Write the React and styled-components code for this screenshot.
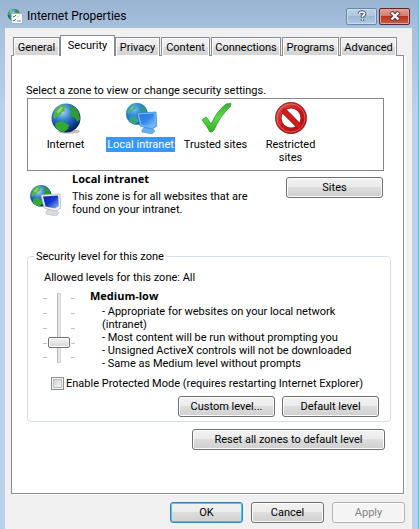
import { useState } from "react";
import styled, { createGlobalStyle } from "styled-components";

const tabs = [
  { name: "General", width: 47 },
  { name: "Security", width: 55 },
  { name: "Privacy", width: 45 },
  { name: "Content", width: 49 },
  { name: "Connections", width: 70 },
  { name: "Programs", width: 57 },
  { name: "Advanced", width: 57 },
];

function Continents() {
  return (
    <>
      <path
        d="M5 9C7 5 11 3 14 3L16 5L14 7L15 9L12 10L10 13L7 14L5 17L3 15Z"
        fill="#52b53c"
      />
      <path
        d="M21 4C25 5 28 8 29 12L30 17L28 20L26 18L25 15L22 15L20 12L22 9L20 6Z"
        fill="#2f9c2e"
      />
      <path
        d="M6 21L10 19L14 20L19 23L18 27L14 30C10 30 6 27 5 24Z"
        fill="#35a935"
      />
      <path d="M7 9L11 5L13 5L11 9L8 12Z" fill="#b4e38e" opacity=".7" />
    </>
  );
}

function Globe({ id }) {
  return (
    <>
      <defs>
        <radialGradient id={id} cx=".38" cy=".28" r=".75">
          <stop offset="0" stopColor="#a8d8f5" />
          <stop offset=".4" stopColor="#3382cb" />
          <stop offset=".75" stopColor="#124398" />
          <stop offset="1" stopColor="#061c56" />
        </radialGradient>
      </defs>
      <circle cx="16" cy="16" r="14.5" fill={`url(#${id})`} />
      <Continents />
    </>
  );
}

function GlobeIcon() {
  return (
    <svg width="32" height="32" viewBox="0 0 32 32" aria-hidden="true">
      <ellipse cx="19" cy="29.5" rx="11" ry="2" fill="#777" opacity=".5" />
      <Globe id="globe-internet" />
    </svg>
  );
}

function IntranetIcon({ id, selected }) {
  const edge = selected ? "#6cb8f4" : "#f1f4f7";
  return (
    <svg width="32" height="32" viewBox="0 0 32 32" aria-hidden="true">
      <defs>
        <linearGradient id={`${id}-screen`} x1="0" y1="0" x2="1" y2="1">
          <stop offset="0" stopColor={selected ? "#2a72dd" : "#0c22a6"} />
          <stop offset=".5" stopColor={selected ? "#3487e8" : "#153bd0"} />
          <stop offset="1" stopColor={selected ? "#8ac7fb" : "#9bc2f2"} />
        </linearGradient>
      </defs>
      <g transform="scale(.74)">
        <Globe id={`${id}-globe`} />
        {selected && <circle cx="16" cy="16" r="15" fill="#3399ff" opacity=".4" />}
      </g>
      <path
        d="M17 28L20 24L26 25L30 29L27 32L17 30Z"
        fill={selected ? "#65b0f0" : "#d9dde0"}
        stroke={selected ? "#4d94d2" : "#b1b7bd"}
        strokeWidth=".6"
      />
      <path
        d="M12 11L31 10L32 24L27 27L15 24Z"
        fill={edge}
        stroke={selected ? "#3182cf" : "#a9b0b7"}
        strokeWidth=".7"
      />
      <path d="M14 12.500L29 11.500L30 22L26 24.500L16.500 22.500Z" fill={`url(#${id}-screen)`} />
    </svg>
  );
}

function CheckIcon() {
  return (
    <svg width="32" height="32" viewBox="0 0 32 32" aria-hidden="true">
      <defs>
        <linearGradient id="check-fill" x1="0" y1="0" x2="0" y2="1">
          <stop offset="0" stopColor="#3fae37" />
          <stop offset=".5" stopColor="#58dd45" />
          <stop offset="1" stopColor="#2fae25" />
        </linearGradient>
      </defs>
      <path
        d="M2 18L6 15Q8 17 11 22Q17 9 26 2L31 1.500L30 5Q20 14 14 28L12 30L10 30Q7 24 2 18Z"
        fill="url(#check-fill)"
        stroke="#34942e"
        strokeWidth=".8"
      />
    </svg>
  );
}

function BlockedIcon() {
  return (
    <svg width="32" height="32" viewBox="0 0 32 32" aria-hidden="true">
      <defs>
        <linearGradient id="blocked-fill" x1="0" y1="0" x2="1" y2="1">
          <stop offset="0" stopColor="#d9504f" />
          <stop offset=".5" stopColor="#cc1717" />
          <stop offset="1" stopColor="#b40c0c" />
        </linearGradient>
      </defs>
      <g fill="none">
        <circle cx="16" cy="16" r="12.700" stroke="#9c2020" strokeWidth="6.500" />
        <path d="M7 7L25 25" stroke="#a01818" strokeWidth="6" />
        <circle cx="16" cy="16" r="12.700" stroke="url(#blocked-fill)" strokeWidth="4.600" />
        <circle cx="16" cy="16" r="14" stroke="#e58a86" strokeWidth=".8" opacity=".8" />
        <path d="M7.500 7.500L24.500 24.500" stroke="#cf1c1c" strokeWidth="4.600" />
      </g>
    </svg>
  );
}

function PropertiesIcon() {
  return (
    <svg width="16" height="16" viewBox="0 0 16 16" aria-hidden="true">
      <g transform="scale(.42)">
        <Globe id="globe-title" />
      </g>
      <rect x="4.500" y="5.500" width="11" height="10" fill="#f8fafb" stroke="#a9b6c0" />
      <path d="M6 8l1 1 2-2M6 12l1 1 2-2" fill="none" stroke="#3a7fb4" />
      <path d="M10 13h4" stroke="#7f8c96" />
      <path d="M10 9h2" stroke="#c6cdd2" />
    </svg>
  );
}

function HelpIcon() {
  return (
    <svg width="12" height="12" viewBox="0 0 12 12" aria-hidden="true">
      <g fill="none">
        <path d="M3.500 4V3Q6 1 8.500 3Q9 5 6.500 6V8M6.500 9V11" stroke="#4b5768" strokeWidth="3.400" />
        <path d="M3.500 4V3Q6 1 8.500 3Q9 5 6.500 6V7.500M6.500 9V10.500" stroke="#fff" strokeWidth="1.600" />
      </g>
    </svg>
  );
}

function CloseIcon() {
  return (
    <svg width="12" height="10" viewBox="0 0 12 10" aria-hidden="true">
      <path d="M2 1L10 9M10 1L2 9" stroke="#5b3a42" strokeWidth="4.400" />
      <path d="M2.500 1.500L9.500 8.500M9.500 1.500L2.500 8.500" stroke="#f4f4f4" strokeWidth="2.400" />
    </svg>
  );
}

const zones = [
  { name: "Internet", icon: () => <GlobeIcon /> },
  {
    name: "Local intranet",
    icon: (selected) => <IntranetIcon id="zone" selected={selected} />,
  },
  { name: "Trusted sites", icon: () => <CheckIcon /> },
  { name: "Restricted sites", icon: () => <BlockedIcon /> },
];

function App() {
  const [tab, setTab] = useState("Security");
  const [zone, setZone] = useState("Local intranet");
  const [level, setLevel] = useState(1);

  return (
    <>
      <GlobalStyle />
      <Window>
        <TitleBar>
          <PropertiesIcon />
          <Title>Internet Properties</Title>
          <CaptionButton aria-label="Help">
            <HelpIcon />
          </CaptionButton>
          <CaptionButton $close aria-label="Close">
            <CloseIcon />
          </CaptionButton>
        </TitleBar>
        <Body>
          <TabList role="tablist">
            {tabs.map((item) => (
              <Tab
                key={item.name}
                role="tab"
                aria-selected={tab === item.name}
                $active={tab === item.name}
                $width={item.width}
                onClick={() => setTab(item.name)}
              >
                {item.name}
              </Tab>
            ))}
          </TabList>
          <Panel>
            <Prompt id="zone-prompt">
              Select a zone to view or change security settings.
            </Prompt>
            <ZoneList aria-labelledby="zone-prompt" role="group">
              {zones.map((item) => (
                <Zone
                  key={item.name}
                  aria-pressed={zone === item.name}
                  onClick={() => setZone(item.name)}
                >
                  {item.icon(zone === item.name)}
                  <ZoneName $selected={zone === item.name}>{item.name}</ZoneName>
                </Zone>
              ))}
            </ZoneList>
            <ZoneInfo>
              <IntranetIcon id="info" />
              <ZoneText>
                <Heading>Local intranet</Heading>
                <p>This zone is for all websites that are found on your intranet.</p>
              </ZoneText>
              <Button $width={97}>Sites</Button>
            </ZoneInfo>
            <Group>
              <legend>Security level for this zone</legend>
              <Allowed id="allowed">Allowed levels for this zone: All</Allowed>
              <LevelRow>
                <Slider>
                  <Ticks />
                  <Range
                    type="range"
                    min="0"
                    max="4"
                    value={level}
                    aria-labelledby="allowed"
                    onChange={(e) => setLevel(Number(e.target.value))}
                  />
                  <Ticks />
                </Slider>
                <div>
                  <Heading>Medium-low</Heading>
                  <Details>
                    <li>- Appropriate for websites on your local network (intranet)</li>
                    <li>- Most content will be run without prompting you</li>
                    <li>- Unsigned ActiveX controls will not be downloaded</li>
                    <li>- Same as Medium level without prompts</li>
                  </Details>
                </div>
              </LevelRow>
              <CheckLabel>
                <Checkbox type="checkbox" />
                Enable Protected Mode (requires restarting Internet Explorer)
              </CheckLabel>
              <GroupButtons>
                <Button $width={97}>Custom level...</Button>
                <Button $width={97}>Default level</Button>
              </GroupButtons>
            </Group>
            <ResetRow>
              <Button $width={193}>Reset all zones to default level</Button>
            </ResetRow>
          </Panel>
          <Footer>
            <Button $width={73} $primary>
              OK
            </Button>
            <Button $width={73}>Cancel</Button>
            <Button $width={73} disabled>
              Apply
            </Button>
          </Footer>
        </Body>
      </Window>
    </>
  );
}

export default App;

const GlobalStyle = createGlobalStyle`
  * {
    box-sizing: border-box;
    margin: 0;
    padding: 0;
  }
  body {
    background: #b9d1ea;
    color: #000;
  }
  body, button, input {
    font-family: Tahoma, Roboto, sans-serif;
    font-size: 11px;
    line-height: 13px;
  }
  svg {
    display: block;
    flex-shrink: 0;
  }
`;

const Window = styled.div`
  padding: 0 6px 0 5px;
  border-right: 1px solid #45cdec;
  background: linear-gradient(#99b4d1, #a6c0dd 28px, #b9d1ea 110px);
`;

const TitleBar = styled.header`
  display: flex;
  align-items: center;
  gap: 2px;
  height: 28px;
  padding: 4px 2px 0;
`;

const Title = styled.h1`
  flex: 1;
  padding-left: 2px;
  font-size: 12px;
  font-weight: 400;
  line-height: 16px;
`;

const CaptionButton = styled.button`
  display: flex;
  align-items: center;
  justify-content: center;
  width: 31px;
  height: 17px;
  border: 1px solid ${(p) => (p.$close ? "#5c2531" : "#6a85a5")};
  border-radius: 2px;
  box-shadow: inset 0 0 0 1px ${(p) => (p.$close ? "#e0a29b" : "#c9dbef")};
  background: ${(p) =>
    p.$close
      ? "linear-gradient(#e3a197, #d2796b 48%, #b8321c 50%, #cb6048)"
      : "linear-gradient(#bdd0e7, #afc6e1 48%, #9db7d5 50%, #b3cae4)"};
`;

const Body = styled.main`
  padding: 7px 7px 6px 6px;
  background: #f0f0f0;
`;

const TabList = styled.div`
  display: flex;
  align-items: flex-end;
  height: 21px;
  padding: 0 2px;
  gap: 1px;
`;

const Tab = styled.button`
  flex: 0 1 ${(p) => p.$width}px;
  height: ${(p) => (p.$active ? 21 : 19)}px;
  margin: ${(p) => (p.$active ? "0 -1px" : "0")};
  padding-bottom: ${(p) => (p.$active ? 2 : 0)}px;
  border: 1px solid #898c95;
  border-bottom: 0;
  position: relative;
  z-index: ${(p) => (p.$active ? 1 : 0)};
  box-shadow: ${(p) => (p.$active ? "none" : "inset 0 0 0 1px #fbfbfb")};
  background: ${(p) =>
    p.$active ? "#fff" : "linear-gradient(#f2f2f2, #ebebeb 48%, #dedede 50%, #d2d2d2)"};
  white-space: nowrap;
`;

const Panel = styled.section`
  margin-top: -1px;
  padding: 28px 12px 43px 15px;
  margin-right: 1px;
  border: 1px solid #898c95;
  box-shadow: 2px 1px 0 #fff;
  background: #fff;
`;

const Prompt = styled.p`
  margin-left: -1px;
`;

const ZoneList = styled.div`
  display: flex;
  height: 73px;
  margin: 1px 7px 0 0;
  padding: 3px 0;
  border: 1px solid #828790;
`;

const Zone = styled.button`
  display: flex;
  flex-direction: column;
  align-items: center;
  gap: 3px;
  width: 75px;
  border: 0;
  background: none;
`;

const ZoneName = styled.span`
  max-width: 70px;
  padding: 1px;
  background: ${(p) => (p.$selected ? "#3399ff" : "transparent")};
  color: ${(p) => (p.$selected ? "#fff" : "#000")};
`;

const ZoneInfo = styled.div`
  display: flex;
  align-items: flex-start;
  padding: 0 8px 0 2px;
  margin-top: 1px;
  > svg {
    margin-top: 12px;
  }
  button {
    margin-top: 5px;
  }
`;

const ZoneText = styled.div`
  flex: 1;
  padding: 0 24px 0 11px;
  p {
    margin-top: 5px;
  }
`;

const Heading = styled.h2`
  font-family: Tahoma, "Open Sans", sans-serif;
  font-size: 11px;
  font-weight: 700;
  line-height: 13px;
`;

const Button = styled.button`
  width: ${(p) => p.$width}px;
  height: 21px;
  border: 1px solid ${(p) => (p.$primary ? "#3c7fb1" : "#707070")};
  border-radius: 3px;
  box-shadow: inset 0 0 0 1px ${(p) => (p.$primary ? "#48c8f0" : "#fcfcfc")};
  background: linear-gradient(#f2f2f2, #ebebeb 49%, #dddddd 50%, #cfcfcf);
  color: #000;
  &:disabled {
    border-color: #adb2b5;
    background: #f4f4f4;
    color: #838383;
  }
`;

const Group = styled.fieldset`
  margin-top: 34px;
  padding: 0 11px 4px 15px;
  border: 1px solid #d5dfe5;
  border-radius: 4px;
  legend {
    margin-left: -9px;
    padding: 0 2px;
  }
`;

const Allowed = styled.p`
  margin-top: 8px;
  margin-left: 1px;
`;

const LevelRow = styled.div`
  display: flex;
  gap: 15px;
  margin-top: 5px;
`;

const Slider = styled.div`
  display: flex;
  flex-shrink: 0;
  width: 32px;
  height: 70px;
  margin-top: 4px;
  justify-content: space-between;
`;

const Ticks = styled.div`
  width: 4px;
  height: 60px;
  margin-top: 5px;
  background: repeating-linear-gradient(#c4c4c4 0 1px, transparent 1px 15px);
  border-bottom: 1px solid #c4c4c4;
`;

const Range = styled.input`
  appearance: none;
  writing-mode: vertical-lr;
  direction: rtl;
  width: 22px;
  height: 70px;
  background: none;
  &::-webkit-slider-runnable-track {
    width: 4px;
    height: 70px;
    border: 1px solid #d6d6d6;
    border-left-color: #b0b0b0;
    background: #e7eaea;
  }
  &::-webkit-slider-thumb {
    appearance: none;
    width: 22px;
    height: 11px;
    margin-left: -10px;
    border: 1px solid #707070;
    border-radius: 2px;
    box-shadow: inset 0 0 0 1px #fcfcfc;
    background: linear-gradient(#f4f4f4, #d6d6d6);
  }
`;

const Details = styled.ul`
  margin-top: 3px;
  padding-left: 12px;
  list-style: none;
`;

const CheckLabel = styled.label`
  display: flex;
  align-items: center;
  gap: 2px;
  margin: 7px 0 0 8px;
  white-space: nowrap;
`;

const Checkbox = styled.input`
  appearance: none;
  width: 13px;
  height: 13px;
  border: 1px solid #8e8f8f;
  background: linear-gradient(135deg, #cbcfd5, #f6f6f6) content-box;
  padding: 2px;
  box-shadow: inset 0 0 0 1px #f4f4f4, inset 0 0 0 2px #b8bdc4;
  &:checked {
    background: #4b6a9b content-box;
  }
`;

const GroupButtons = styled.div`
  display: flex;
  justify-content: flex-end;
  gap: 7px;
  margin-top: 6px;
`;

const ResetRow = styled.div`
  display: flex;
  justify-content: flex-end;
  padding: 7px 6px 0 0;
`;

const Footer = styled.footer`
  display: flex;
  justify-content: flex-end;
  gap: 8px;
  margin-top: 8px;
`;
